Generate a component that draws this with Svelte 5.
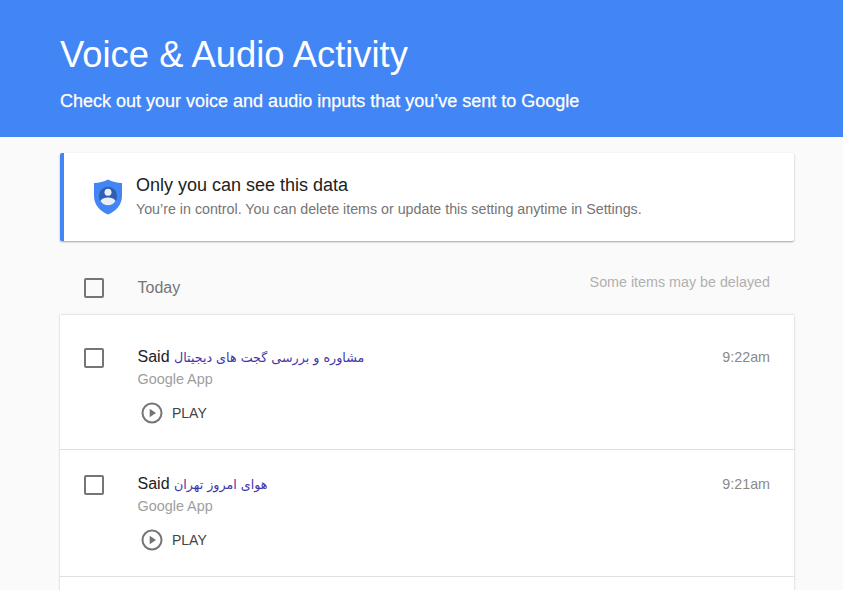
<script>
  const items = [
    { query: 'مشاوره و بررسی گجت های دیجیتال', time: '9:22am' },
    { query: 'هوای امروز تهران', time: '9:21am' }
  ];
</script>

<div class="page">
  <header class="hero">
    <h1>Voice &amp; Audio Activity</h1>
    <p>Check out your voice and audio inputs that you’ve sent to Google</p>
  </header>
  <main class="content">
    <section class="notice">
      <svg class="shield" width="28" height="36" viewBox="0 0 28 36" aria-hidden="true">
        <path d="M14 0.5 C18 2.8 23 4 28 4 V17 C28 26 21.500 32.500 14 35.500 C6.500 32.500 0 26 0 17 V4 C5 4 10 2.800 14 0.500 Z" fill="#4285f4"/>
        <circle cx="14" cy="17" r="9.200" fill="#2f5fb0"/>
        <circle cx="14" cy="13.300" r="3.500" fill="#e8effc"/>
        <path d="M6.400 22 C8 19.500 11 18.600 14 18.600 C17 18.600 20 19.500 21.600 22 C20 24.800 17 26.200 14 26.200 C11 26.200 8 24.800 6.400 22 Z" fill="#e8effc"/>
      </svg>
      <div>
        <h2>Only you can see this data</h2>
        <p>You’re in control. You can delete items or update this setting anytime in Settings.</p>
      </div>
    </section>

    <div class="day">
      <span class="check"></span>
      <span class="today">Today</span>
      <span class="delayed">Some items may be delayed</span>
    </div>

    <section class="list">
      {#each items as item}
        <article class="row">
          <span class="check"></span>
          <div class="body">
            <div class="title">Said <span class="query" dir="rtl">{item.query}</span></div>
            <div class="source">Google App</div>
            <div class="play">
              <svg width="22" height="22" viewBox="0 0 22 22" aria-hidden="true">
                <circle cx="11" cy="11" r="9.500" fill="none" stroke="#757575" stroke-width="2"/>
                <path d="M8.700 6.800 L15 11 L8.700 15.200 Z" fill="#757575"/>
              </svg>
              <span>PLAY</span>
            </div>
          </div>
          <time>{item.time}</time>
        </article>
      {/each}
    </section>
  </main>
</div>

<style>
  :global(body) {
    margin: 0;
    background: #fafafa;
    font-family: "Liberation Sans", Arial, sans-serif;
    overflow: hidden;
  }
  .page { height: 590px; overflow: hidden; }
  .hero {
    background: #4285f4;
    color: #fff;
    height: 137px;
    box-sizing: border-box;
    padding: 33px 60px 0;
  }
  h1 { margin: 0; font-size: 36.4px; line-height: 44px; font-weight: 400; }
  .hero p { margin: 13px 0 0; font-size: 18px; line-height: 22px; font-weight: 400; -webkit-text-stroke: 0.25px #fff; }
  .content { margin: 0 49px 0 60px; padding-top: 16px; }
  .notice {
    height: 88px;
    box-sizing: border-box;
    background: #fff;
    border-left: 4px solid #4285f4;
    border-radius: 2px;
    box-shadow: 0 1px 2px rgba(0,0,0,.35);
    display: flex;
    align-items: center;
    gap: 14px;
    padding-left: 30px;
  }
  .shield { flex: none; }
  h2 { margin: 0; font-size: 18px; line-height: 20px; font-weight: 400; color: #212121; position: relative; top: -1px; }
  .notice p { margin: 5px 0 0; font-size: 14.25px; line-height: 17px; color: #757575; }
  .day {
    height: 74px;
    box-sizing: border-box;
    padding: 20px 24px 0;
    display: flex;
    align-items: center;
  }
  .check {
    flex: none;
    width: 16px;
    height: 16px;
    border: 2px solid #757575;
    border-radius: 2px;
  }
  .today { margin-left: 33.5px; font-size: 16px; color: #757575; }
  .delayed { margin: 0 0 12px auto; font-size: 14.3px; color: #b0b0b0; }
  .list {
    background: #fff;
    box-shadow: 0 0 2px rgba(0,0,0,.25);
    padding: 8px 0 60px;
  }
  .row {
    height: 127px;
    box-sizing: border-box;
    border-bottom: 1px solid #e0e0e0;
    padding: 25px 24px 0;
    display: flex;
    align-items: flex-start;
  }
  .body { margin: -1px 0 0 33.5px; flex: 1; }
  .title { font-size: 16px; line-height: 20px; color: #212121; }
  .query { color: #3f35a8; font-family: "DejaVu Sans", sans-serif; font-size: 12.7px; unicode-bidi: isolate; }
  .source { margin-top: 1px; font-size: 14.4px; line-height: 20px; color: #9e9e9e; }
  .play { display: flex; align-items: center; gap: 9px; margin: 13px 0 0 3.5px; font-size: 14px; color: #424242; height: 22px; }
  time { margin-top: -1px; font-size: 14.3px; line-height: 20px; color: #8a8a8a; }
</style>
